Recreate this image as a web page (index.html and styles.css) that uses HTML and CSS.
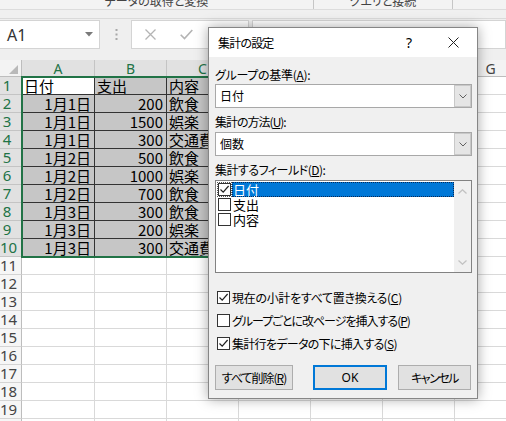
FILE: index.html
```html
<!DOCTYPE html>
<html lang="ja">
<head>
<meta charset="utf-8">
<title>集計の設定</title>
<link rel="stylesheet" href="styles.css">
</head>
<body>
<div class="app">
  <div class="ribbon">
    <div class="groups">
      <div class="group g1"><span>データの取得と変換</span></div>
      <div class="group g2"><span>クエリと接続</span></div>
      <div class="group g3"></div>
    </div>
    <div class="band"></div>
  </div>

  <div class="fbar">
    <div class="namebox">
      <span>A1</span>
      <svg class="nb-arrow" width="8" height="5" viewBox="0 0 8 5"><polygon points="0,0 8,0 4,4.5" fill="#7a7a7a"/></svg>
    </div>
    <div class="grip">
      <svg width="3" height="11" viewBox="0 0 3 11"><rect x="0.5" y="0" width="2" height="2" fill="#a8a8a8"/><rect x="0.5" y="4.5" width="2" height="2" fill="#a8a8a8"/><rect x="0.5" y="9" width="2" height="2" fill="#a8a8a8"/></svg>
    </div>
    <div class="fbtns">
      <svg class="fx-cancel" width="11" height="11" viewBox="0 0 11 11"><path d="M0.5 0.5 L10.5 10.5 M10.5 0.5 L0.5 10.5" stroke="#b4b4b4" stroke-width="1.3"/></svg>
      <svg class="fx-ok" width="13" height="11" viewBox="0 0 13 11"><path d="M0.7 5.8 L4.5 9.6 L12.3 1" stroke="#b4b4b4" stroke-width="1.6" fill="none"/></svg>
    </div>
    <div class="finput"></div>
  </div>

  <div class="sheet-wrap">
  <div class="sheet">
    <div class="corner"><svg width="9" height="9" viewBox="0 0 9 9"><polygon points="9,0 9,9 0,9" fill="#b9b9b9"/></svg></div>
    <div class="ch on">A</div><div class="ch on">B</div><div class="ch on">C</div><div class="ch">D</div><div class="ch">E</div><div class="ch">F</div><div class="ch">G</div>

    <div class="rh on">1</div><div class="c d act">日付</div><div class="c d">支出</div><div class="c d">内容</div><div class="c"></div><div class="c"></div><div class="c"></div><div class="c"></div>
    <div class="rh on">2</div><div class="c d r">1月1日</div><div class="c d r">200</div><div class="c d">飲食</div><div class="c"></div><div class="c"></div><div class="c"></div><div class="c"></div>
    <div class="rh on">3</div><div class="c d r">1月1日</div><div class="c d r">1500</div><div class="c d">娯楽</div><div class="c"></div><div class="c"></div><div class="c"></div><div class="c"></div>
    <div class="rh on">4</div><div class="c d r">1月1日</div><div class="c d r">300</div><div class="c d">交通費</div><div class="c"></div><div class="c"></div><div class="c"></div><div class="c"></div>
    <div class="rh on">5</div><div class="c d r">1月2日</div><div class="c d r">500</div><div class="c d">飲食</div><div class="c"></div><div class="c"></div><div class="c"></div><div class="c"></div>
    <div class="rh on">6</div><div class="c d r">1月2日</div><div class="c d r">1000</div><div class="c d">娯楽</div><div class="c"></div><div class="c"></div><div class="c"></div><div class="c"></div>
    <div class="rh on">7</div><div class="c d r">1月2日</div><div class="c d r">700</div><div class="c d">飲食</div><div class="c"></div><div class="c"></div><div class="c"></div><div class="c"></div>
    <div class="rh on">8</div><div class="c d r">1月3日</div><div class="c d r">300</div><div class="c d">飲食</div><div class="c"></div><div class="c"></div><div class="c"></div><div class="c"></div>
    <div class="rh on">9</div><div class="c d r">1月3日</div><div class="c d r">200</div><div class="c d">娯楽</div><div class="c"></div><div class="c"></div><div class="c"></div><div class="c"></div>
    <div class="rh on">10</div><div class="c d r">1月3日</div><div class="c d r">300</div><div class="c d">交通費</div><div class="c"></div><div class="c"></div><div class="c"></div><div class="c"></div>
    <div class="rh">11</div><div class="c"></div><div class="c"></div><div class="c"></div><div class="c"></div><div class="c"></div><div class="c"></div><div class="c"></div>
    <div class="rh">12</div><div class="c"></div><div class="c"></div><div class="c"></div><div class="c"></div><div class="c"></div><div class="c"></div><div class="c"></div>
    <div class="rh">13</div><div class="c"></div><div class="c"></div><div class="c"></div><div class="c"></div><div class="c"></div><div class="c"></div><div class="c"></div>
    <div class="rh">14</div><div class="c"></div><div class="c"></div><div class="c"></div><div class="c"></div><div class="c"></div><div class="c"></div><div class="c"></div>
    <div class="rh">15</div><div class="c"></div><div class="c"></div><div class="c"></div><div class="c"></div><div class="c"></div><div class="c"></div><div class="c"></div>
    <div class="rh">16</div><div class="c"></div><div class="c"></div><div class="c"></div><div class="c"></div><div class="c"></div><div class="c"></div><div class="c"></div>
    <div class="rh">17</div><div class="c"></div><div class="c"></div><div class="c"></div><div class="c"></div><div class="c"></div><div class="c"></div><div class="c"></div>
    <div class="rh">18</div><div class="c"></div><div class="c"></div><div class="c"></div><div class="c"></div><div class="c"></div><div class="c"></div><div class="c"></div>
    <div class="rh">19</div><div class="c"></div><div class="c"></div><div class="c"></div><div class="c"></div><div class="c"></div><div class="c"></div><div class="c"></div>
    <div class="rh">20</div><div class="c"></div><div class="c"></div><div class="c"></div><div class="c"></div><div class="c"></div><div class="c"></div><div class="c"></div>
  </div>
  <div class="selbox"></div>
  </div>

  <div class="dlg">
    <div class="dlg-title">
      <span class="title-text">集計の設定</span>
      <span class="help">?</span>
      <span class="close"><svg width="11" height="11" viewBox="0 0 11 11"><path d="M0.5 0.5 L10.5 10.5 M10.5 0.5 L0.5 10.5" stroke="#222" stroke-width="1"/></svg></span>
    </div>
    <div class="dlg-body">
      <div class="lbl lbl-a">グループの基準(<u>A</u>):</div>
      <div class="combo combo-1">
        <span class="combo-text">日付</span>
        <span class="combo-btn"><svg width="8" height="5" viewBox="0 0 8 5"><polyline points="0.5,0.5 4,4 7.5,0.5" fill="none" stroke="#606060" stroke-width="1"/></svg></span>
      </div>
      <div class="lbl lbl-2 lbl-u">集計の方法(<u>U</u>):</div>
      <div class="combo">
        <span class="combo-text">個数</span>
        <span class="combo-btn"><svg width="8" height="5" viewBox="0 0 8 5"><polyline points="0.5,0.5 4,4 7.5,0.5" fill="none" stroke="#606060" stroke-width="1"/></svg></span>
      </div>
      <div class="lbl lbl-2 lbl-d">集計するフィールド(<u>D</u>):</div>
      <div class="listbox">
        <div class="items">
          <div class="item">
            <span class="cb cb-focus"><svg width="11" height="11" viewBox="0 0 11 11"><polyline points="1.5,5.5 4.2,8.2 9.6,2" fill="none" stroke="#222" stroke-width="1.2"/></svg></span>
            <span class="item-text hl">日付</span>
          </div>
          <div class="item">
            <span class="cb"></span>
            <span class="item-text">支出</span>
          </div>
          <div class="item">
            <span class="cb"></span>
            <span class="item-text">内容</span>
          </div>
        </div>
        <div class="vscroll">
          <svg width="9" height="5" viewBox="0 0 9 5"><polyline points="0.5,4.5 4.5,0.8 8.5,4.5" fill="none" stroke="#c2c2c2" stroke-width="1.3"/></svg>
          <svg width="9" height="5" viewBox="0 0 9 5"><polyline points="0.5,0.5 4.5,4.2 8.5,0.5" fill="none" stroke="#c2c2c2" stroke-width="1.3"/></svg>
        </div>
      </div>
      <div class="opts">
        <div class="opt">
          <span class="cb"><svg width="11" height="11" viewBox="0 0 11 11"><polyline points="1.5,5.5 4.2,8.2 9.6,2" fill="none" stroke="#222" stroke-width="1.2"/></svg></span>
          <span class="opt-text opt-1">現在の小計をすべて置き換える(<u>C</u>)</span>
        </div>
        <div class="opt">
          <span class="cb"></span>
          <span class="opt-text opt-2">グループごとに改ページを挿入する(<u>P</u>)</span>
        </div>
        <div class="opt">
          <span class="cb"><svg width="11" height="11" viewBox="0 0 11 11"><polyline points="1.5,5.5 4.2,8.2 9.6,2" fill="none" stroke="#222" stroke-width="1.2"/></svg></span>
          <span class="opt-text opt-3">集計行をデータの下に挿入する(<u>S</u>)</span>
        </div>
      </div>
      <div class="btns">
        <span class="btn btn-del"><span class="btn-label">すべて削除(<u>R</u>)</span></span>
        <span class="btn btn-ok">OK</span>
        <span class="btn btn-cancel"><span class="btn-label-c">キャンセル</span></span>
      </div>
    </div>
  </div>
</div>
</body>
</html>
```

FILE: styles.css
```css
* { box-sizing: border-box; margin: 0; padding: 0; }
html, body { width: 506px; height: 421px; overflow: hidden; }
body {
  background: #fff;
  font-family: "Noto Sans CJK JP", "Noto Sans", sans-serif;
  font-feature-settings: "palt";
  color: #222;
}
.app { position: relative; width: 506px; height: 421px; overflow: hidden; }

/* ribbon remnant */
.ribbon { height: 19px; background: #f3f3f3; }
.groups { display: flex; height: 10px; overflow: hidden; border-bottom: 1px solid #dcdcdc; }
.group {
  display: flex; justify-content: center;
  border-right: 1px solid #c6c6c6;
  font-size: 12px; line-height: 12px; color: #444;
}
.group span { margin-top: -5px; white-space: nowrap; }
.g1 { width: 314px; }
.g2 { width: 139px; }
.g3 { flex: 1; border-right: 0; }
.band { height: 9px; background: #f0f0f0; border-bottom: 1px solid #dadada; }

/* formula bar */
.fbar { display: flex; align-items: flex-start; height: 41px; padding-top: 1px; background: #efefef; }
.namebox {
  width: 101px; height: 29px; margin-left: -1px;
  background: #fff; border: 1px solid #d4d4d4;
  display: flex; align-items: center; justify-content: space-between;
  padding: 0 6px 0 7px;
  font-family: "Noto Sans", sans-serif; font-size: 16px; color: #333;
}
.grip { width: 3px; height: 29px; margin-left: 15px; display: flex; align-items: center; }
.fbtns {
  width: 118px; height: 29px; margin-left: 13px;
  background: #fff; border: 1px solid #d4d4d4;
  display: flex; align-items: center; padding-left: 13px;
}
.fx-ok { margin-left: 24px; }
.finput { flex: 1; height: 29px; margin-left: 3px; background: #fff; border: 1px solid #d4d4d4; }

/* sheet */
.sheet-wrap { position: relative; }
.sheet {
  display: grid;
  grid-template-columns: 22px 73px repeat(6, 72px);
  grid-template-rows: 17px repeat(20, 18px);
}
.corner {
  background: #f3f3f3; border-right: 1px solid #bdbdbd; border-bottom: 1px solid #bdbdbd;
  display: flex; align-items: flex-end; justify-content: flex-end; padding: 0 3px 2px 0;
}
.ch {
  background: #f3f3f3; border-right: 1px solid #d4d4d4; border-bottom: 1px solid #bdbdbd;
  font-family: "Noto Sans", sans-serif; font-size: 14px; line-height: 17px; color: #444;
  text-align: center;
}
.ch.on { background: #e1e1e1; color: #217346; border-right-color: #c4c4c4; }
.rh {
  background: #f6f6f6; border-right: 1px solid #bdbdbd; border-bottom: 1px solid #d4d4d4;
  font-family: "Noto Sans", sans-serif; font-size: 15px; line-height: 17px; color: #444;
  text-align: center; padding-right: 7px; white-space: nowrap;
}
.rh.on { background: #e1e1e1; color: #217346; border-bottom-color: #c4c4c4; }
.c {
  border-right: 1px solid #d9d9d9; border-bottom: 1px solid #d9d9d9;
  font-size: 15px; line-height: 17px; padding: 0 3px 0 2px; white-space: nowrap; color: #000;
}
.c.d { background: #c6c6c6; border-right-color: #333; border-bottom-color: #333; }
.c.act { background: #fff; }
.c.r { text-align: right; }
.selbox {
  position: absolute; left: 21px; top: 16px; width: 219px; height: 182px;
  border: 2px solid #217346;
}

/* dialog */
.dlg {
  position: absolute; left: 208px; top: 27px; width: 270px; height: 372px;
  background: #f0f0f0; border: 1px solid #868686;
  box-shadow: 0 0 12px rgba(0, 0, 0, 0.35);
  display: flex; flex-direction: column;
  font-size: 12px; color: #000;
}
.dlg-title { height: 29px; background: #fff; display: flex; align-items: center; padding: 0 9px 0 9px; }
.title-text { flex: 1; letter-spacing: -0.8px; }
.help { width: 30px; margin-right: 14px; text-align: center; font-family: "Noto Sans", sans-serif; font-size: 14px; }
.close { width: 30px; height: 29px; display: flex; align-items: center; justify-content: center; }
.dlg-body { padding: 10px 5px 0 6px; display: flex; flex-direction: column; }
.lbl { height: 16px; line-height: 16px; white-space: nowrap; }
.lbl-a { letter-spacing: -0.3px; }
.lbl-u { letter-spacing: -1px; }
.lbl-d { letter-spacing: -0.5px; }
.lbl-2 { margin-top: 6px; }
.combo {
  margin-top: 2px; height: 24px; background: #fff; border: 1px solid #a8a8a8;
  display: flex; align-items: stretch;
}
.combo-1 { margin-top: 1px; }
.combo-text { flex: 1; padding-left: 4px; line-height: 22px; }
.combo-btn {
  width: 17px; background: #e5e5e5; border: 1px solid #c8c8c8; margin: 0;
  display: flex; align-items: center; justify-content: center;
}
.listbox {
  margin-top: 2px; height: 93px; background: #fff; border: 1px solid #828282;
  display: flex;
}
.items { flex: 1; padding-top: 1px; }
.item { display: flex; align-items: center; height: 15px; padding-left: 2px; }
.item-text { flex: 1; height: 15px; line-height: 15px; margin-left: 1px; padding-left: 1px; font-size: 13px; }
.item-text.hl { background: #0078d7; color: #fff; outline: 1px dotted #0a2a55; outline-offset: -1px; }
.cb {
  width: 13px; height: 13px; flex: none; background: #fff; border: 1px solid #333;
  display: flex; align-items: center; justify-content: center;
}
.cb-focus { outline: 1px dotted #555; outline-offset: 0; }
.vscroll {
  width: 17px; background: #f0f0f0;
  display: flex; flex-direction: column; align-items: center; justify-content: space-between;
  padding: 8px 0 7px;
}
.opts { margin-top: 16px; display: flex; flex-direction: column; gap: 7px; }
.opt { display: flex; align-items: center; height: 16px; padding-left: 2px; gap: 2px; }
.opt-text { white-space: nowrap; }
.opt-1 { letter-spacing: -0.3px; }
.opt-2 { letter-spacing: -1px; }
.opt-3 { letter-spacing: -0.7px; }
.btns { margin-top: 14px; display: flex; }
.btn {
  height: 25px; background: #e1e1e1; border: 1px solid #adadad;
  display: flex; align-items: center; justify-content: center; white-space: nowrap;
}
.btn-label { letter-spacing: -1px; }
.btn-label-c { letter-spacing: -1.5px; }
.btn-del { width: 78px; }
.btn-ok { width: 74px; margin-left: 20px; border: 2px solid #0078d7; font-family: "Noto Sans", sans-serif; }
.btn-cancel { width: 73px; margin-left: 11px; }
```
